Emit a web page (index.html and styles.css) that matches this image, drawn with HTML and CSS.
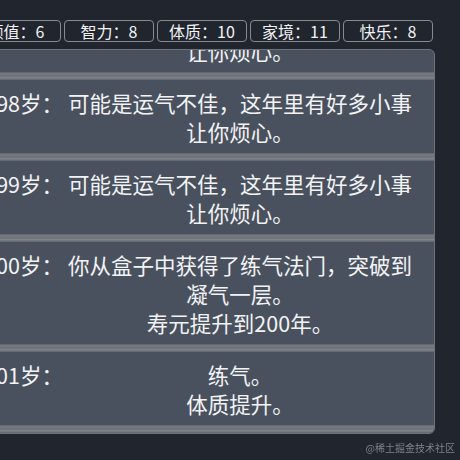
FILE: index.html
```html
<!DOCTYPE html>
<html lang="zh-CN">
<head>
<meta charset="utf-8">
<title>人生重开</title>
<link rel="stylesheet" href="styles.css">
</head>
<body>
<div class="page">
  <div class="stats">
    <div class="stat">颜值：6</div>
    <div class="stat">智力：8</div>
    <div class="stat">体质：10</div>
    <div class="stat">家境：11</div>
    <div class="stat">快乐：8</div>
  </div>
  <div class="panel">
    <div class="list">
      <div class="entry">
        <div class="row"><div class="age">97岁：</div><div class="text">可能是运气不佳，这年里有好多小事让你烦心。</div></div>
      </div>
      <div class="entry">
        <div class="row"><div class="age">98岁：</div><div class="text">可能是运气不佳，这年里有好多小事让你烦心。</div></div>
      </div>
      <div class="entry">
        <div class="row"><div class="age">99岁：</div><div class="text">可能是运气不佳，这年里有好多小事让你烦心。</div></div>
      </div>
      <div class="entry">
        <div class="row"><div class="age">100岁：</div><div class="text">你从盒子中获得了练气法门，突破到凝气一层。<br>寿元提升到200年。</div></div>
      </div>
      <div class="entry">
        <div class="row"><div class="age">101岁：</div><div class="text">练气。<br>体质提升。</div></div>
      </div>
    </div>
  </div>
</div>
<div class="watermark">@稀土掘金技术社区</div>
</body>
</html>
```
FILE: styles.css
```css
html, body {
  margin: 0;
  height: 100%;
}
body {
  background: #21252d;
  color: #f2f3f5;
  font-family: "Noto Sans CJK SC", "Noto Sans", sans-serif;
  overflow: hidden;
}
.page {
  margin-left: -31px;
  width: 466px;
  padding-top: 20px;
}
.stats {
  display: flex;
  gap: 3px;
  padding: 0 2px;
}
.stat {
  width: 90px;
  height: 22px;
  box-sizing: border-box;
  border: 1px solid #878a91;
  border-radius: 4px;
  display: flex;
  align-items: center;
  justify-content: center;
  font-size: 16px;
  line-height: 20px;
  white-space: nowrap;
}
.panel {
  margin-top: 7px;
  height: 385px;
  box-sizing: border-box;
  border: 1px solid #6c717a;
  border-radius: 6px;
  background: #4a515e;
  overflow: hidden;
}
.list {
  margin-top: -51px;
}
.entry::after {
  content: "";
  display: block;
  height: 8px;
  background: linear-gradient(to bottom, #60646d 0, #787c84 25%, #6a6e77 50%, #80848b 70%, #5f636c 100%);
}
.row {
  display: flex;
  padding: 8px 0 7px;
  font-size: 21.5px;
  line-height: 29px;
}
.age {
  flex: none;
  width: 93px;
  text-align: right;
  white-space: nowrap;
}
.text {
  flex: 1;
  text-align: center;
  padding-right: 17px;
}
.watermark {
  position: fixed;
  right: 5px;
  bottom: 5px;
  font-size: 10px;
  color: #7e828a;
}
```
